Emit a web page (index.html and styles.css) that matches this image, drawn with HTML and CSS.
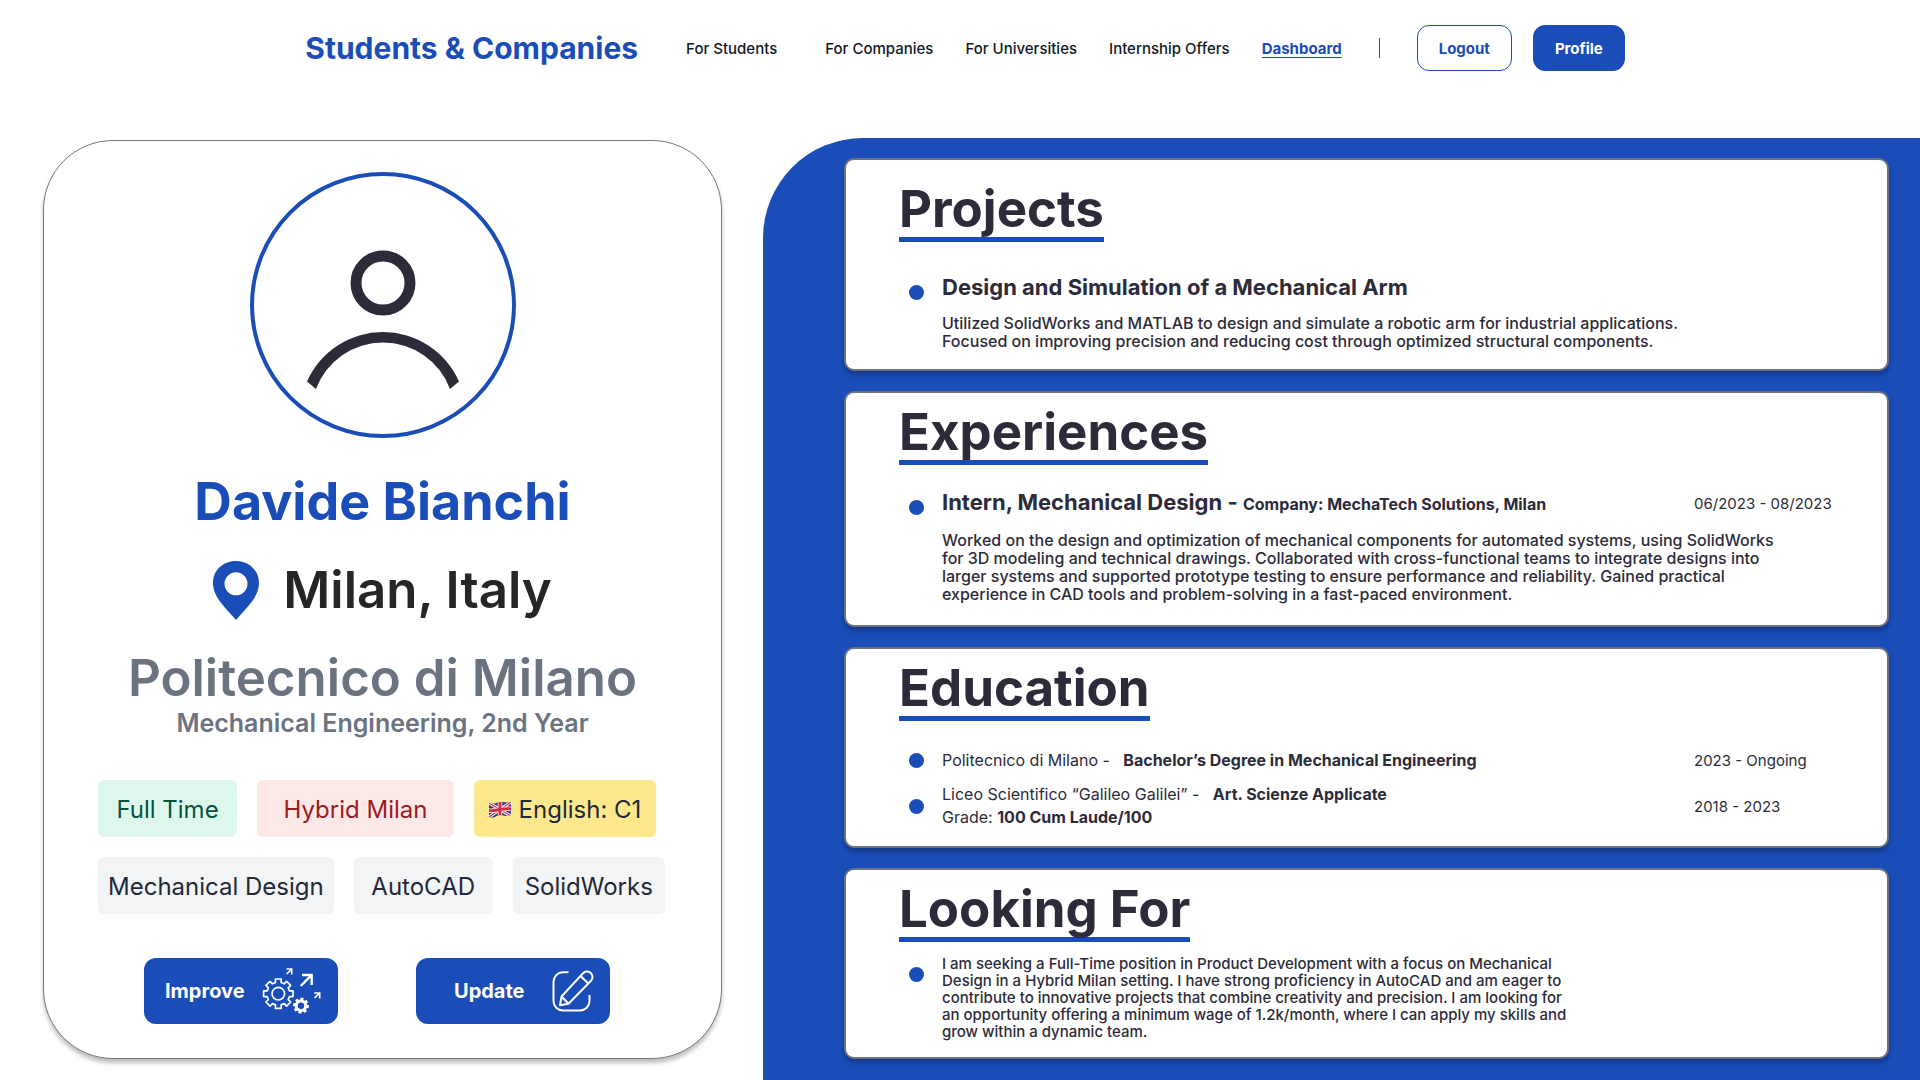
FILE: index.html
```html
<!DOCTYPE html>
<html lang="en">
<head>
<meta charset="utf-8">
<meta name="viewport" content="width=device-width, initial-scale=1">
<title>Students &amp; Companies - Dashboard</title>
<link rel="stylesheet" href="styles.css">
</head>
<body>
<header class="site-header">
  <a class="brand" href="#">Students &amp; Companies</a>
  <nav class="nav" aria-label="Main">
    <a class="nav-link nav-link-first" href="#">For Students</a>
    <a class="nav-link" href="#">For Companies</a>
    <a class="nav-link" href="#">For Universities</a>
    <a class="nav-link" href="#">Internship Offers</a>
    <a class="nav-link nav-link-active" href="#" aria-current="page">Dashboard</a>
  </nav>
  <span class="divider"></span>
  <div class="account">
    <button class="btn btn-outline" type="button">Logout</button>
    <button class="btn btn-solid" type="button">Profile</button>
  </div>
</header>

<main class="dashboard">
  <div class="profile-column">
    <section class="profile-card">
      <svg class="avatar" viewBox="0 0 266 266" role="img" aria-label="Profile picture">
        <circle cx="133" cy="133" r="131" fill="none" stroke="#1a4db8" stroke-width="4"/>
        <circle cx="133" cy="111" r="27" fill="none" stroke="#2d2b3a" stroke-width="11"/>
        <path fill="#2d2b3a" d="M57 209.500A83.100 83.100 0 0 1 209 209.500L200 217A71.500 71.500 0 0 0 66 217Z"/>
      </svg>
      <h1 class="name">Davide Bianchi</h1>
      <p class="location">
        <svg class="pin" viewBox="0 0 46 59" aria-hidden="true"><path fill="#1a4db8" fill-rule="evenodd" d="M23 0C10 0 0 9.500 0 22c0 14 12 24 23 37 11-13 23-23 23-37C46 9.500 36 0 23 0Zm0 11.300a11.500 11.500 0 1 1 0 23 11.500 11.500 0 0 1 0-23Z"/></svg>
        Milan, Italy
      </p>
      <p class="university">Politecnico di Milano</p>
      <p class="degree">Mechanical Engineering, 2nd Year</p>
      <ul class="tags">
        <li class="tag tag-green tag-small">Full Time</li>
        <li class="tag tag-red tag-large">Hybrid Milan</li>
        <li class="tag tag-yellow tag-medium">
          <svg class="flag" viewBox="0 0 22 17" aria-hidden="true">
            <clipPath id="flag-shape"><path d="M0 2C5 4 8 1 12 1s6 1 10 0V14C18 16 14 14 11 14S5 18 0 16Z"/></clipPath>
            <g clip-path="url(#flag-shape)">
              <rect width="22" height="17" fill="#2b3f87"/>
              <path d="M0 2 22 15M0 16 22 1" stroke="#fff" stroke-width="3"/>
              <path d="M0 2 22 15M0 16 22 1" stroke="#d32d46" stroke-width="1.200"/>
              <path d="M11 0V17M0 9.500C6 10.500 14 6.500 22 8" fill="none" stroke="#fff" stroke-width="4.500"/>
              <path d="M11 0V17M0 9.500C6 10.500 14 6.500 22 8" fill="none" stroke="#d32d46" stroke-width="3"/>
            </g>
          </svg>
          English: C1
        </li>
        <li class="tag">Mechanical Design</li>
        <li class="tag tag-small">AutoCAD</li>
        <li class="tag tag-regular">SolidWorks</li>
      </ul>
      <div class="actions">
        <button class="action" type="button">
          Improve
          <svg class="icon-improve" viewBox="0 0 60 47" fill="none" stroke="#fff" aria-hidden="true">
            <g transform="translate(16.300 25.700)" stroke-width="1.700" stroke-linejoin="round">
              <path d="M-2.800-11.200-2.900-14.700 2.900-14.700 2.800-11.200 5.900-9.900 8.300-12.400 12.400-8.300 9.900-5.900 11.200-2.800 14.700-2.900 14.700 2.900 11.200 2.800 9.900 5.900 12.400 8.300 8.300 12.400 5.900 9.900 2.800 11.200 2.900 14.700-2.900 14.700-2.800 11.200-5.900 9.900-8.300 12.400-12.400 8.300-9.900 5.900-11.200 2.800-14.700 2.900-14.700-2.900-11.200-2.800-9.900-5.900-12.400-8.300-8.300-12.400-5.900-9.900Z"/>
              <circle r="6.300"/>
            </g>
            <g transform="translate(39 37.700) rotate(8) scale(.54)" stroke="none">
              <path fill="#fff" d="M-2.800-11.200-2.900-14.700 2.900-14.700 2.800-11.200 5.900-9.900 8.300-12.400 12.400-8.300 9.900-5.900 11.200-2.800 14.700-2.900 14.700 2.900 11.200 2.800 9.900 5.900 12.400 8.300 8.300 12.400 5.900 9.900 2.800 11.200 2.900 14.700-2.900 14.700-2.800 11.200-5.900 9.900-8.300 12.400-12.400 8.300-9.900 5.900-11.200 2.800-14.700 2.900-14.700-2.900-11.200-2.800-9.900-5.900-12.400-8.300-8.300-12.400-5.900-9.900Z"/>
              <circle r="6" fill="#1a4db8"/>
            </g>
            <path stroke-width="2.400" d="M38.700 18 49.500 7.200M40 7H49.700V17"/>
            <path stroke-width="1.600" d="M24.700 6 29.500 1.200M24.500 1H29.700V6.500M52.500 30 57.500 25.200M52.300 25H57.700V30.500"/>
          </svg>
        </button>
        <button class="action action-update" type="button">
          Update
          <svg class="icon-edit" viewBox="0 0 42 42" fill="none" stroke="#fff" stroke-width="2" stroke-linejoin="round" aria-hidden="true">
            <path d="M16.500 2.300H11A9.500 9.500 0 0 0 1.500 11.800V31A9.500 9.500 0 0 0 11 40.500H28A9.500 9.500 0 0 0 37.500 31V25"/>
            <path d="M8 35.300 9.500 26.500 31 3.200A5 5 0 0 1 39 10.700L16.500 33.800ZM9.500 26.500 16.500 33.800M28.500 6 36.300 13.500"/>
          </svg>
        </button>
      </div>
    </section>
  </div>

  <div class="panel">
    <section class="card card-projects">
      <h2 class="card-title">Projects</h2>
      <ul class="entries">
        <li class="entry">
          <span class="bullet"></span>
          <div class="entry-body">
            <h3 class="entry-title">Design and Simulation of a Mechanical Arm</h3>
            <p class="entry-text">Utilized SolidWorks and MATLAB to design and simulate a robotic arm for industrial applications.<br>Focused on improving precision and reducing cost through optimized structural components.</p>
          </div>
        </li>
      </ul>
    </section>

    <section class="card card-experiences">
      <h2 class="card-title">Experiences</h2>
      <ul class="entries">
        <li class="entry">
          <span class="bullet"></span>
          <div class="entry-body">
            <div class="entry-head">
              <h3 class="entry-title">Intern, Mechanical Design - <span class="company">Company: MechaTech Solutions, Milan</span></h3>
              <span class="date">06/2023 - 08/2023</span>
            </div>
            <p class="entry-text">Worked on the design and optimization of mechanical components for automated systems, using SolidWorks<br>for 3D modeling and technical drawings. Collaborated with cross-functional teams to integrate designs into<br>larger systems and supported prototype testing to ensure performance and reliability. Gained practical<br>experience in CAD tools and problem-solving in a fast-paced environment.</p>
          </div>
        </li>
      </ul>
    </section>

    <section class="card card-education">
      <h2 class="card-title">Education</h2>
      <ul class="entries">
        <li class="entry entry-centered">
          <span class="bullet"></span>
          <div class="entry-body entry-head">
            <p class="school">Politecnico di Milano - <strong class="course">Bachelor’s Degree in Mechanical Engineering</strong></p>
            <span class="date">2023 - Ongoing</span>
          </div>
        </li>
        <li class="entry entry-centered">
          <span class="bullet"></span>
          <div class="entry-body entry-head">
            <p class="school">Liceo Scientifico “Galileo Galilei” - <strong class="course">Art. Scienze Applicate</strong><br>Grade: <strong>100 Cum Laude/100</strong></p>
            <span class="date">2018 - 2023</span>
          </div>
        </li>
      </ul>
    </section>

    <section class="card card-looking">
      <h2 class="card-title">Looking For</h2>
      <ul class="entries">
        <li class="entry">
          <span class="bullet"></span>
          <div class="entry-body">
            <p class="pitch">I am seeking a Full-Time position in Product Development with a focus on Mechanical<br>Design in a Hybrid Milan setting. I have strong proficiency in AutoCAD and am eager to<br>contribute to innovative projects that combine creativity and precision. I am looking for<br>an opportunity offering a minimum wage of 1.2k/month, where I can apply my skills and<br>grow within a dynamic team.</p>
          </div>
        </li>
      </ul>
    </section>
  </div>
</main>
</body>
</html>
```
FILE: styles.css
```css
:root {
  --blue: #1a4db8;
  --ink: #2d2b3a;
  --gray: #6b7280;
}

* { box-sizing: border-box; }

body {
  margin: 0;
  min-height: 100vh;
  display: flex;
  flex-direction: column;
  background: #fff;
  color: var(--ink);
  font-family: Inter, "Liberation Sans", sans-serif;
}

h1, h2, h3, p, ul { margin: 0; padding: 0; }
ul { list-style: none; }
button { font-family: inherit; cursor: pointer; }
svg { display: block; flex: none; }

/* Header */
.site-header {
  display: flex;
  align-items: center;
  justify-content: center;
  padding: 25px 24px 67px 34px;
}
.brand {
  color: var(--blue);
  font-size: 30px;
  font-weight: 700;
  line-height: 46px;
  text-decoration: none;
  white-space: nowrap;
}
.nav {
  display: flex;
  gap: 32px;
  margin-left: 48px;
}
.nav-link {
  padding-top: 2px;
  color: #111928;
  font-size: 15px;
  font-weight: 500;
  line-height: 20px;
  text-decoration: none;
  white-space: nowrap;
}
.nav-link-first { margin-right: 16px; }
.nav-link-active {
  color: var(--blue);
  font-weight: 700;
  text-decoration: underline;
  text-underline-offset: 3px;
}
.divider {
  width: 1px;
  height: 20px;
  margin: 0 37px;
  background: var(--blue);
}
.account { display: flex; gap: 21px; }
.btn {
  height: 46px;
  padding: 0 21px;
  border: 1px solid var(--blue);
  border-radius: 12px;
  font-size: 15px;
  font-weight: 700;
}
.btn-outline { background: #fff; color: var(--blue); }
.btn-solid { background: var(--blue); color: #fff; }

/* Page columns */
.dashboard {
  flex: 1;
  display: grid;
  grid-template-columns: minmax(660px, 763fr) minmax(960px, 1157fr);
}
.profile-column { padding: 2px 41px 20px 43px; }

/* Profile card */
.profile-card {
  display: flex;
  flex-direction: column;
  align-items: center;
  padding: 31px 0 34px;
  border: 1px solid #777;
  border-radius: 70px;
  background: #fff;
  box-shadow: 0 4px 4px rgba(0, 0, 0, .25);
}
.avatar { width: 266px; height: 266px; }
.name, .location, .university {
  font-size: 51px;
  font-weight: 600;
  line-height: 60px;
  white-space: nowrap;
}
.name {
  margin-top: 34px;
  color: var(--blue);
  font-size: 52px;
  font-weight: 700;
}
.location {
  display: flex;
  align-items: center;
  gap: 24px;
  margin-top: 28px;
  color: #262626;
}
.pin { width: 46px; height: 59px; }
.university { margin-top: 28px; color: var(--gray); }
.degree {
  color: var(--gray);
  font-size: 25px;
  font-weight: 600;
  line-height: 30px;
}
.tags {
  display: flex;
  flex-wrap: wrap;
  gap: 20px;
  align-self: stretch;
  margin-top: 42px;
  padding: 0 44px 0 54px;
}
.tag {
  display: flex;
  align-items: center;
  justify-content: center;
  gap: 8px;
  height: 57px;
  padding: 2px 10px 0;
  border-radius: 6px;
  background: #f3f4f6;
  color: #1f2937;
  font-size: 24px;
  white-space: nowrap;
}
.tag-small { min-width: 139px; }
.tag-regular { min-width: 152px; }
.tag-medium { min-width: 182px; }
.tag-large { min-width: 197px; }
.tag-green { background: #def7ec; color: #03543f; }
.tag-red { background: #fde8e8; color: #9b1c1c; }
.tag-yellow { background: #fde88e; }
.flag { width: 22px; height: 17px; }
.actions {
  display: flex;
  justify-content: space-between;
  align-self: stretch;
  margin-top: 44px;
  padding: 0 111px 0 100px;
}
.action {
  display: flex;
  align-items: center;
  justify-content: space-between;
  width: 194px;
  height: 66px;
  padding: 0 16px 0 21px;
  border: 0;
  border-radius: 12px;
  background: var(--blue);
  color: #fff;
  font-size: 20px;
  font-weight: 700;
}
.action-update { padding-left: 38px; }
.icon-improve { width: 60px; height: 47px; }
.icon-edit { width: 42px; height: 42px; }

/* Right-hand panel */
.panel {
  display: flex;
  flex-direction: column;
  gap: 20px;
  padding: 20px 31px 20px 81px;
  border-top-left-radius: 100px;
  background: var(--blue);
}
.card {
  padding: 10px 33px 17px 53px;
  border: 2px solid var(--gray);
  border-radius: 10px;
  background: #fff;
  box-shadow: 0 4px 4px rgba(0, 0, 0, .25);
}
.card-title {
  width: fit-content;
  border-bottom: 5px solid var(--blue);
  font-size: 51px;
  font-weight: 700;
  line-height: 57px;
}
.entries {
  display: flex;
  flex-direction: column;
  gap: 11px;
  padding-left: 10px;
}
.entry {
  display: flex;
  align-items: flex-start;
  gap: 18px;
}
.entry-centered { align-items: center; }
.bullet {
  flex: none;
  width: 15px;
  height: 15px;
  margin-top: 12px;
  border-radius: 50%;
  background: var(--blue);
}
.entry-centered .bullet { margin-top: 0; }
.entry-body { flex: 1; }
.entry-head {
  display: flex;
  align-items: center;
  justify-content: space-between;
}
.entry-title {
  font-size: 22px;
  font-weight: 700;
  line-height: 28px;
}
.company { font-size: 16px; }
.date {
  flex: none;
  width: 160px;
  font-size: 15px;
  line-height: 23px;
}
.entry-text {
  margin-top: 13px;
  font-size: 16px;
  font-weight: 500;
  line-height: 18px;
}
.school { font-size: 16px; line-height: 23px; }
.course { margin-left: 9px; }
.pitch {
  font-size: 15px;
  font-weight: 500;
  line-height: 17px;
}

.card-projects { padding-top: 20px; padding-bottom: 19px; }
.card-projects .entries { margin-top: 31px; }
.card-experiences { padding-bottom: 22px; }
.card-experiences .entries { margin-top: 23px; }
.card-education .entries { margin-top: 28px; }
.card-looking .entries { margin-top: 13px; }
```
